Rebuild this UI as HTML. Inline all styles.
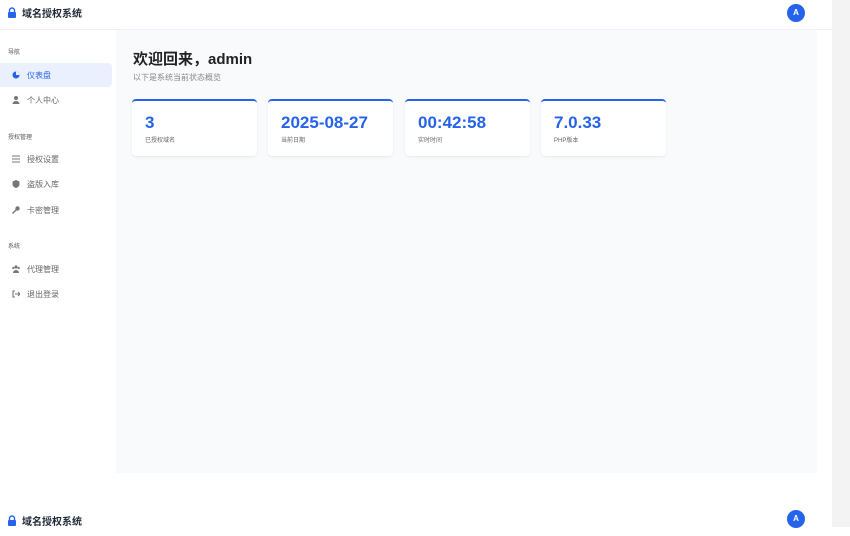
<!DOCTYPE html>
<html><head><meta charset="utf-8"><style>
*{margin:0;padding:0;box-sizing:border-box}
body{width:850px;height:527px;overflow:hidden;background:#fff;font-family:"Liberation Sans","Noto Sans CJK SC",sans-serif;position:relative}
.gut{position:absolute;left:832px;top:0;width:18px;height:527px;background:#f3f3f3}
.hdr{position:absolute;left:0;width:832px;height:30px;background:#fff;border-bottom:1px solid #eef0f3}
.logo{position:absolute;left:7px;top:5px;font-size:10px;font-weight:bold;color:#1f2937;display:flex;align-items:center;gap:5px}
.av{position:absolute;left:787px;top:4px;width:18px;height:18px;border-radius:50%;background:#2563eb;color:#fff;font-size:8px;font-weight:bold;text-align:center;line-height:18px}
.side{position:absolute;left:0;top:30px;width:116px;height:443px;background:#fff}
.sec{position:absolute;left:8px;font-size:6px;color:#555}
.it{position:absolute;left:0;width:112px;height:24px;font-size:8px;color:#666;display:flex;align-items:center;padding-left:27px}
.it.on{background:#eaf0fd;color:#2563eb;border-radius:0 4px 4px 0}
.ic{position:absolute;left:12px;top:8px;width:8px;height:8px}
.main{position:absolute;left:116px;top:30px;width:701px;height:443px;background:#f8fafc}
h1{position:absolute;left:133px;top:48px;font-size:15px;color:#222;font-weight:bold}
.sub{position:absolute;left:133px;top:72px;font-size:8px;color:#888}
.card{position:absolute;top:99px;width:125px;height:57px;background:#fff;border-top:2px solid #2563eb;border-radius:4px;box-shadow:0 1px 2px rgba(0,0,0,.08)}
.card b{position:absolute;left:13px;top:12px;font-size:17px;color:#2563eb}
.card span{position:absolute;left:13px;top:34px;font-size:6px;color:#666}
</style></head><body>
<div class="gut"></div>
<div class="hdr" style="top:0"><div class="logo"><svg width="10" height="11" viewBox="0 0 10 11"><path d="M2.5 5V3.5a2.5 2.5 0 0 1 5 0V5" fill="none" stroke="#2563eb" stroke-width="1.4"/><rect x="1" y="5" width="8" height="6" rx="1" fill="#2563eb"/></svg>域名授权系统</div><div class="av">A</div></div>
<div class="side">
<div class="sec" style="top:17px">导航</div>
<div class="it on" style="top:33px"><svg class="ic" viewBox="0 0 8 8"><circle cx="4" cy="4" r="3.5" fill="#2563eb"/><path d="M4 4V0.5A3.5 3.5 0 0 1 7.5 4Z" fill="#eaf0fd"/></svg>仪表盘</div>
<div class="it" style="top:58px"><svg class="ic" viewBox="0 0 8 8"><circle cx="4" cy="2" r="2" fill="#777"/><path d="M0.5 8a3.5 3 0 0 1 7 0Z" fill="#777"/></svg>个人中心</div>
<div class="sec" style="top:102px">授权管理</div>
<div class="it" style="top:117px"><svg class="ic" viewBox="0 0 8 8"><path d="M0 1h8M0 4h8M0 7h8" stroke="#777"/></svg>授权设置</div>
<div class="it" style="top:142px"><svg class="ic" viewBox="0 0 8 8"><path d="M4 0L7.5 1.5V4C7.5 6 6 7.5 4 8C2 7.5 0.5 6 0.5 4V1.5Z" fill="#777"/></svg>盗版入库</div>
<div class="it" style="top:168px"><svg class="ic" viewBox="0 0 8 8"><circle cx="5.5" cy="2.5" r="2.2" fill="#777"/><path d="M4.5 3.5L0.5 7.5" stroke="#777" stroke-width="1.4"/></svg>卡密管理</div>
<div class="sec" style="top:211px">系统</div>
<div class="it" style="top:227px"><svg class="ic" viewBox="0 0 8 8"><circle cx="4" cy="2" r="1.6" fill="#777"/><circle cx="1.3" cy="3" r="1.1" fill="#777"/><circle cx="6.7" cy="3" r="1.1" fill="#777"/><path d="M1 8a3 3 0 0 1 6 0Z" fill="#777"/></svg>代理管理</div>
<div class="it" style="top:252px"><svg class="ic" viewBox="0 0 8 8"><path d="M3 1H1v6h2M3 4h5M6 2l2 2-2 2" fill="none" stroke="#777" stroke-width="1.1"/></svg>退出登录</div>
</div>
<div class="main"></div>
<h1>欢迎回来，admin</h1>
<div class="sub">以下是系统当前状态概览</div>
<div class="card" style="left:132px"><b>3</b><span>已授权域名</span></div>
<div class="card" style="left:268px"><b>2025-08-27</b><span>当前日期</span></div>
<div class="card" style="left:405px"><b>00:42:58</b><span>实时时间</span></div>
<div class="card" style="left:541px"><b>7.0.33</b><span>PHP版本</span></div>
<div class="hdr" style="top:506px;border:none"><div class="logo" style="top:7px"><svg width="10" height="11" viewBox="0 0 10 11"><path d="M2.5 5V3.5a2.5 2.5 0 0 1 5 0V5" fill="none" stroke="#2563eb" stroke-width="1.4"/><rect x="1" y="5" width="8" height="6" rx="1" fill="#2563eb"/></svg>域名授权系统</div><div class="av" style="top:4px">A</div></div>
</body></html>
